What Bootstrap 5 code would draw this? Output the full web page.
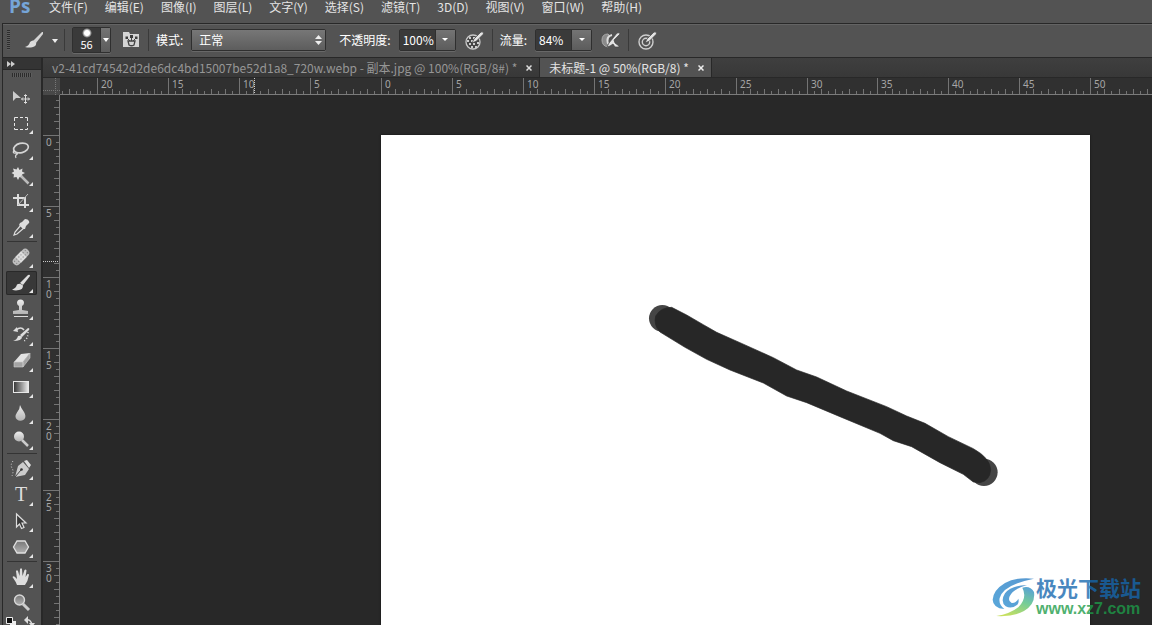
<!DOCTYPE html>
<html lang="zh-CN">
<head>
<meta charset="utf-8">
<meta name="viewport" content="width=device-width, initial-scale=1">
<title>Ps</title>
<link href="https://cdn.jsdelivr.net/npm/bootstrap@5.3.0/dist/css/bootstrap.min.css" rel="stylesheet">
<style>
  :root { --panel: #535353; --edge: #282828; --ink: #e4e4e4; }
  body { background: var(--panel); color: var(--ink); font: 12px/20px "Noto Sans CJK SC", "Noto Sans", sans-serif; }
  button, input, select { font: inherit; color: inherit; padding: 0; border: 0; background: none; }
  button { display: flex; align-items: center; justify-content: center; }
  svg { display: block; flex: none; }

  .menu-bar { height: 23px; padding-left: 9px; gap: 17px; }
  .menu-bar a { line-height: 14px; color: var(--ink); text-decoration: none; white-space: nowrap; }
  .app-logo { width: 23px; color: #76a5d8; font: bold 19px/13px "Open Sans", sans-serif; }

  .option-bar { height: 35px; padding: 0 0 2px 4px; margin-left: 2px; border: 1px solid var(--edge); border-width: 1px 0 1px 1px; box-shadow: inset 0 1px #646464; }
  .option-bar label { line-height: 16px; color: #fff; white-space: nowrap; }
  .grip-v { width: 3px; height: 20px; background: repeating-linear-gradient(#2c2c2c 0 1px, #5d5d5d 1px 2px); }
  .divider { width: 1px; height: 22px; margin: 0 7px 0 6px; background: #3a3a3a; }
  .brush-pick { margin-left: 15px; }
  .brush-panel { margin: 0 2px 0 12px; }
  .opacity-label { margin-left: 13px; }
  .field { height: 22px; border: 1px solid #2f2f2f; border-radius: 2px; box-shadow: 0 1px #686868; }
  .field input { width: 35px; height: 20px; background: #3a3a3a; color: #fff; padding-left: 3px; }
  .field button { width: 20px; height: 20px; background: linear-gradient(#747474, #5c5c5c); border-left: 1px solid #2f2f2f; }
  .field.preset { height: 26px; }
  .field.preset .tip { width: 27px; height: 24px; background: #3a3a3a; color: #fff; flex-direction: column; justify-content: flex-start; border: 0; line-height: 11px; font-size: 11px; }
  .field.preset .drop { width: 10px; height: 24px; }
  .mode-pick { width: 135px; }
  .mode-pick select { display: block; width: 100%; height: 20px; padding: 0 7px; appearance: none; color: #fff; background: linear-gradient(#777, #5d5d5d); line-height: 18px; }
  .mode-pick svg { right: 3px; top: 5px; pointer-events: none; }

  .tool-panel { width: 41px; margin-left: 2px; border: 1px solid var(--edge); border-width: 0 2px 0 1px; }
  .tool-head { height: 12px; background: #343434; border-bottom: 1px solid var(--edge); padding-left: 4px; }
  .grip-h { width: 20px; height: 4px; margin: 3px auto 7px; background: repeating-linear-gradient(90deg, #2c2c2c 0 1px, #5d5d5d 1px 2px); }
  .tool { width: 31px; height: 26px; margin: 0 3px; flex: none; }
  .tool.active { height: 24px; margin: 1px 3px; background: #383838; box-shadow: inset 0 0 0 1px #292929; border-radius: 2px; }
  .tool-rule { height: 1px; margin: 1px 4px 2px; background: #343434; flex: none; }

  .tab-strip { height: 20px; background: linear-gradient(#3f3f3f, #383838); border-bottom: 1px solid var(--edge); }
  .doc-tab { height: 19px; padding: 0 6px 0 9px; border-right: 1px solid var(--edge); color: #969696; white-space: nowrap; }
  .doc-tab a { color: inherit; text-decoration: none; }
  .doc-tab.active { background: var(--panel); color: var(--ink); }
  .doc-tab button { width: 8px; height: 14px; margin-left: 8px; }

  .corner { width: 17px; height: 17px; background: #484848; flex: none; }
  .ruler { background: #303030; overflow: hidden; }
  .ruler-x { height: 17px; border-bottom: 1px solid #7b7b7b; }
  .ruler-y { width: 17px; flex: none; border-right: 1px solid #7b7b7b; }
  .ruler path { stroke: #747474; fill: none; shape-rendering: crispEdges; }
  .ruler text { fill: #a6a6a6; font: 10px "Noto Sans", sans-serif; }
  .stage { background: #282828; padding: 40px 62px 0 321px; }
  .sheet { background: #fff; box-shadow: 0 0 2px #111; overflow: hidden; }
  .site-mark { right: 11px; bottom: 7px; opacity: .78; }
  .site-name { font: bold 21px/24px "Noto Sans CJK SC", sans-serif; color: #1667ae; }
  .site-url { font: bold 16px/19px "Liberation Sans", sans-serif; color: #1d9c48; text-decoration: none; }
</style>
</head>
<body class="vh-100 overflow-hidden d-flex flex-column">

<nav class="menu-bar d-flex flex-shrink-0 align-items-start">
  <span class="app-logo">Ps</span>
  <a href="#">文件(F)</a><a href="#">编辑(E)</a><a href="#">图像(I)</a><a href="#">图层(L)</a><a href="#">文字(Y)</a><a href="#">选择(S)</a><a href="#">滤镜(T)</a><a href="#">3D(D)</a><a href="#">视图(V)</a><a href="#">窗口(W)</a><a href="#">帮助(H)</a>
</nav>

<div class="option-bar d-flex flex-shrink-0 align-items-center">
  <span class="grip-v"></span>
  <button type="button" class="brush-pick" aria-label="画笔工具">
    <svg width="33" height="18"><path d="M0 16q4-1 5-5 3-3 6 0 1 4-3 5-4 1-8 0z" fill="#ddd"/><path d="M8 10 17 1h1v2l-7 9z" fill="#d4d4d4"/><path d="M27 8h6l-3 4z" fill="#eee"/></svg>
  </button>
  <span class="divider"></span>
  <div class="field preset d-flex">
    <button type="button" class="tip" aria-label="画笔大小 56"><svg width="14" height="11"><defs><radialGradient id="ball"><stop offset=".5" stop-color="#fff"/><stop offset="1" stop-color="#fff" stop-opacity="0"/></radialGradient></defs><circle cx="7" cy="5" r="5" fill="url(#ball)"/></svg><span>56</span></button>
    <button type="button" class="drop" aria-label="画笔预设"><svg width="6" height="4"><path d="M0 0h6L3 4z" fill="#fff"/></svg></button>
  </div>
  <button type="button" class="brush-panel" aria-label="画笔面板">
    <svg width="17" height="17"><path d="M0 1h6l1 2h9v13H0z" fill="#d4d4d4"/><path d="M5 10h7l-1 4q-2.500 1.500-5 0z" fill="none" stroke="#444" stroke-width="1.300"/><path d="m7 10-3-3M8.500 10V6M10 10l3-3" stroke="#444"/><path d="M2.500 5.500h2.500v2.500H2.500zM7 4h3v3H7zM12 5.500h2.500v2.500H12z" fill="#3c3c3c"/></svg>
  </button>
  <span class="divider"></span>
  <label for="mode">模式:</label>
  <div class="field mode-pick position-relative ms-2">
    <select id="mode"><option>正常</option></select>
    <svg class="position-absolute" width="7" height="10"><path d="M0 4h7L3.500 0zM0 6h7L3.500 10z" fill="#eee"/></svg>
  </div>
  <label for="opacity" class="opacity-label">不透明度:</label>
  <div class="field d-flex ms-2">
    <input id="opacity" type="text" value="100%">
    <button type="button" aria-label="不透明度滑块"><svg width="6" height="3"><path d="M0 0h6L3 3z" fill="#fff"/></svg></button>
  </div>
  <button type="button" class="ms-2" aria-label="不透明度压力">
    <svg width="22" height="20"><circle cx="9" cy="12" r="7" fill="#454545" stroke="#c9c9c9" stroke-width="1.300"/><path d="M5 7h2v2H5zM9 7h2v2H9zM3 10h2v2H3zM7 10h2v2H7zM5 13h2v2H5zM9 13h2v2H9zM13 12h2v2h-2zM7 16h2v2H7zM11 16h2v2h-2z" fill="#ccc"/><path d="m8 13 2-4 7-7q3-1 2.500 2l-7 7z" fill="#e3e3e3" stroke="#444" stroke-width=".7"/></svg>
  </button>
  <span class="divider"></span>
  <label for="flow">流量:</label>
  <div class="field d-flex ms-2">
    <input id="flow" type="text" value="84%">
    <button type="button" aria-label="流量滑块"><svg width="6" height="3"><path d="M0 0h6L3 3z" fill="#fff"/></svg></button>
  </div>
  <button type="button" class="ms-2" aria-label="喷枪">
    <svg width="22" height="20"><path d="M8 4Q2 4 2 10t6 7l1-2Q4 11 9 5z" fill="#8a8a8a" stroke="#aaa"/><path d="M12 5q-6 1-4 9" stroke="#ddd" stroke-width="2" fill="none"/><path d="m14 10 1 3 4 3v1h-4l-2-3-3 2-3 1 2-4 8-10q3-1 3 1z" fill="#e3e3e3" stroke="#444" stroke-width=".7"/></svg>
  </button>
  <span class="divider"></span>
  <button type="button" aria-label="大小压力">
    <svg width="22" height="20"><g fill="none" stroke="#cfcfcf" stroke-width="1.400"><circle cx="10" cy="12" r="7"/><circle cx="10" cy="12" r="3.700"/></g><path d="m9 13 2-4 7-7q3-1 2.500 2l-7 7z" fill="#e3e3e3" stroke="#444" stroke-width=".7"/></svg>
  </button>
</div>

<div class="d-flex flex-fill overflow-hidden">
  <aside class="tool-panel d-flex flex-column flex-shrink-0 overflow-hidden">
    <div class="tool-head d-flex flex-shrink-0 align-items-center"><svg width="8" height="6"><path d="M0 0l4 3-4 3zM4 0l4 3-4 3z" fill="#ccc"/></svg></div>
    <div class="grip-h flex-shrink-0"></div>
    <svg width="0" height="0" class="position-absolute"><defs>
      <path id="more" d="M27 20v4h-4z" fill="#e6e6e6"/>
      <linearGradient id="metal" x2="0" y2="1"><stop stop-color="#eee"/><stop offset="1" stop-color="#b4b4b4"/></linearGradient>
      <linearGradient id="glass" x2="0" y2="1"><stop stop-color="#777"/><stop offset="1" stop-color="#b0b0b0"/></linearGradient>
      <linearGradient id="fade"><stop stop-color="#333"/><stop offset="1" stop-color="#eee"/></linearGradient>
    </defs></svg>
    <button type="button" class="tool" aria-label="移动"><svg width="31" height="26"><path d="M7 7v10l3-3h5z" fill="#ccc"/><path d="M19.500 11v8M15.500 15h8M18 12l1.500-1.500L21 12M18 18l1.500 1.500L21 18M17 13.500 15.500 15l1.500 1.500M22 13.500l1.500 1.500-1.500 1.500" stroke="#ddd" fill="none"/></svg></button>
    <button type="button" class="tool" aria-label="选框"><svg width="31" height="26"><path d="M8.500 11V7.500H12M14 7.500h3M19 7.500h2.500V11M21.500 13v3M21.500 18v1.500H19M17 19.500h-3M12 19.500H8.500V18M8.500 16v-3" stroke="#e6e6e6" fill="none"/><use href="#more"/></svg></button>
    <button type="button" class="tool" aria-label="套索"><svg width="31" height="26"><ellipse cx="15" cy="12" rx="7.500" ry="4.700" transform="rotate(-14 15 12)" fill="none" stroke="#d4d4d4" stroke-width="1.700"/><path d="M8 14q-2 4 2 3 3 0 0 2-1 1 0 3" stroke="#d4d4d4" fill="none" stroke-width="1.300"/><use href="#more"/></svg></button>
    <button type="button" class="tool" aria-label="魔棒"><svg width="31" height="26"><path d="m12 5 1.500 3 3-1.500-.5 3 3 1.500-3 1.500.5 3-3-.5-1.500 3-1.500-3-3 .5.500-3-2.500-1.500 2.500-1.500-1-3 3.500 1z" fill="#ddd"/><path d="m15 14 7.500 7.500" stroke="#bbb" stroke-width="2.500"/><use href="#more"/></svg></button>
    <button type="button" class="tool" aria-label="裁剪"><svg width="31" height="26"><path d="M7 10h12v10M12 6v11h11" fill="none" stroke="#ddd" stroke-width="2"/><path d="m12 17 10-11" stroke="#bbb"/><use href="#more"/></svg></button>
    <button type="button" class="tool" aria-label="吸管"><svg width="31" height="26"><path d="m15 11 3 3-7 6-3 1 1-3z" fill="#555" stroke="#ddd" stroke-width="1.200"/><path d="m14 9 2-1 3-3q3 0 4 2 1 2-1 3l-2 2-1 3-2 0-4-4z" fill="#ddd"/><use href="#more"/></svg></button>
    <div class="tool-rule"></div>
    <button type="button" class="tool" aria-label="修复画笔"><svg width="31" height="26"><g transform="rotate(-45 15 13)"><rect x="5" y="9" width="20" height="8" rx="4" fill="#bdbdbd"/><path d="M11 9h8v8h-8z" fill="#dcdcdc"/><path d="M7 11.500h17M7 14.500h17" stroke="#777" stroke-dasharray="1 2"/></g><use href="#more"/></svg></button>
    <button type="button" class="tool active" aria-label="画笔"><svg width="31" height="26"><path d="M6 19.500q4-1 5-5 3-2 6 1 0 4-4 4.500-4 1-7-.5z" fill="#ddd"/><path d="m14 13 8-8q2-1 2 1l-7 9z" fill="#ddd"/><use href="#more" y="-1"/></svg></button>
    <button type="button" class="tool" aria-label="图章"><svg width="31" height="26"><path d="M13 14V10q-2-1-2-3a3.500 3.500 0 0 1 7 0q0 2-2 3v4l6 1v3H7v-3z" fill="url(#metal)"/><path d="M8 20.500h14" stroke="#ddd"/><use href="#more"/></svg></button>
    <button type="button" class="tool" aria-label="历史画笔"><svg width="31" height="26"><path d="M7 19q4-1 5-5 2-1 4 1 0 4-9 4zM14 13l8-7q2 0 1 2l-7 7z" fill="#ddd"/><path d="M10 8q5-4 8 0" stroke="#ddd" stroke-width="1.500" fill="none"/><path d="m7 9 4-4 1 5z" fill="#ddd"/><path d="M22 10q0 7-4 9" stroke="#ddd" stroke-width="1.500" stroke-dasharray="1 2" fill="none"/><use href="#more"/></svg></button>
    <button type="button" class="tool" aria-label="橡皮擦"><svg width="31" height="26"><path d="m8 14 7-8 9-1-7 9z" fill="#e2e2e2"/><path d="m8 14 9 0v5H8zM17 14l7-9v5l-7 9z" fill="#a4a4a4" stroke="#ccc" stroke-width=".6"/><use href="#more"/></svg></button>
    <button type="button" class="tool" aria-label="渐变"><svg width="31" height="26"><rect x="7.500" y="7.500" width="15" height="11" fill="url(#fade)" stroke="#e8e8e8"/><use href="#more"/></svg></button>
    <button type="button" class="tool" aria-label="模糊"><svg width="31" height="26"><path d="M14 5q1 3 4 7 3 5 0 7.500-4 2.500-7 0-3-2.500 0-7Q14 9 14 5z" fill="url(#metal)"/><use href="#more"/></svg></button>
    <button type="button" class="tool" aria-label="减淡"><svg width="31" height="26"><circle cx="13" cy="10.500" r="5" fill="url(#metal)"/><path d="m16 14 6 6" stroke="#ccc" stroke-width="2.500"/><use href="#more"/></svg></button>
    <div class="tool-rule"></div>
    <button type="button" class="tool" aria-label="钢笔"><svg width="31" height="26"><path d="m18 5 3-1 4 5-2 3z" fill="#ddd"/><path d="m17 6 6 7-4 6-10 2 3-11z" fill="#ccc"/><path d="m9 21 6-7" stroke="#444"/><circle cx="15.500" cy="13.500" r="1.300" fill="#333"/><path d="M7 5q-3 4-1 7t0 8" stroke="#ddd" stroke-dasharray="1 2" fill="none"/><use href="#more"/></svg></button>
    <button type="button" class="tool" aria-label="文字"><svg width="31" height="26"><text x="15" y="19" text-anchor="middle" font-family="Liberation Serif, serif" font-size="20" fill="#ddd">T</text><use href="#more"/></svg></button>
    <button type="button" class="tool" aria-label="路径选择"><svg width="31" height="26"><path d="M10.500 6v13l3-3 2 4.500 2.500-1L16 15h4z" fill="#3a3a3a" stroke="#ddd" stroke-width="1.200"/><use href="#more"/></svg></button>
    <button type="button" class="tool" aria-label="形状"><svg width="31" height="26"><path d="M11 7h8l3.500 6-3.500 6h-8l-3.500-6z" fill="url(#glass)" stroke="#e0e0e0" stroke-width="1.300"/><use href="#more"/></svg></button>
    <div class="tool-rule"></div>
    <button type="button" class="tool" aria-label="抓手"><svg width="31" height="26"><path d="M11 21q-1-3-4.500-8 1-1.500 2.500 0l2 2-1-8q1-1.500 2 0l1.500 5 .5-7q1.200-1.500 2 0l.5 7 2-6q1.500-1 2 .5L19.500 13l2-3q1.500-.5 1.500 1-1 6-4 10z" fill="#ddd"/><use href="#more"/></svg></button>
    <button type="button" class="tool" aria-label="缩放"><svg width="31" height="26"><path d="m17 14 6 6" stroke="#ccc" stroke-width="3"/><circle cx="13.500" cy="10" r="5" fill="url(#glass)" stroke="#d8d8d8" stroke-width="1.400"/></svg></button>
    <button type="button" class="tool" aria-label="前景色与背景色"><svg width="31" height="26"><path d="M4 5h6v6H4z" fill="#eee"/><path d="M.5 1.500h6v6h-6z" fill="#111" stroke="#eee"/><path d="M20 4q5-1 6 5" stroke="#ddd" fill="none" stroke-width="1.500"/><path d="m18 4 4-4v8zM23 7h6l-3 4z" fill="#ddd"/></svg></button>
  </aside>

  <main class="flex-fill d-flex flex-column overflow-hidden">
    <div class="tab-strip d-flex flex-shrink-0">
      <div class="doc-tab d-flex align-items-center"><a href="#">v2-41cd74542d2de6dc4bd15007be52d1a8_720w.webp - 副本.jpg @ 100%(RGB/8#) *</a><button type="button" aria-label="关闭"><svg width="6" height="6"><path d="m.5.500 5 5M5.500.500l-5 5" stroke="#ddd" stroke-width="1.500"/></svg></button></div>
      <div class="doc-tab active d-flex align-items-center"><a href="#">未标题-1 @ 50%(RGB/8) *</a><button type="button" aria-label="关闭"><svg width="6" height="6"><path d="m.5.500 5 5M5.500.500l-5 5" stroke="#eee" stroke-width="1.500"/></svg></button></div>
    </div>
    <div class="d-flex flex-shrink-0">
      <div class="corner"><svg width="17" height="17"><path d="M12.500 0v17M0 12.500h17" stroke="#777" stroke-dasharray="1 1"/></svg></div>
      <div class="ruler ruler-x flex-fill"><svg id="rulerX" width="100%" height="16"></svg></div>
    </div>
    <div class="d-flex flex-fill overflow-hidden">
      <div class="ruler ruler-y"><svg id="rulerY" width="16" height="100%"></svg></div>
      <div class="stage flex-fill d-flex">
        <div class="sheet flex-fill">
          <svg width="640" height="400"><g transform="translate(259 155) scale(.3333)">
            <circle cx="67" cy="85" r="40" fill="#454545"/><circle cx="1032" cy="547" r="41" fill="#454545"/>
            <path d="M95 52 140 75 190 104 230 127 300 158 400 203 470 240 530 261 620 303 740 350 800 378 855 400 925 440 1000 476Q1052 505 1052 540 1050 572 1020 578L1000 576 970 553 900 518 815 470 760 452 720 430 600 380 500 338 440 318 370 279 270 240 200 208 135 172 60 126Q40 105 47 78 62 52 95 52Z" fill="#272727" stroke="#272727" stroke-width="2" stroke-linejoin="round"/>
          </g></svg>
        </div>
      </div>
    </div>
  </main>
</div>

<div class="site-mark position-absolute d-flex align-items-center">
  <svg width="44" height="42" viewBox="21 16 132 126"><defs>
      <linearGradient id="sky" x1="0" y1="1" x2="1" y2="0"><stop stop-color="#2b8fd0"/><stop offset="1" stop-color="#2a7cc4"/></linearGradient>
      <linearGradient id="aurora" x1=".8" y1="0" x2=".3" y2="1"><stop stop-color="#2c8ac8"/><stop offset=".45" stop-color="#4fbf7c"/><stop offset="1" stop-color="#b9d832"/></linearGradient></defs>
    <path d="M147 24Q95 18 60 37 25 58 23 87 24 112 58 115 40 100 44 82 55 42 147 24z" fill="url(#sky)"/>
    <path d="M126 43Q78 45 60 68 45 92 62 107 80 116 97 102 103 95 100 84 94 98 80 97 68 92 74 77 84 55 126 43z" fill="url(#sky)"/>
    <path d="M112 51Q135 44 147 64 152 100 117 121 85 139 34 136 75 130 100 110 128 82 112 51z" fill="url(#aurora)"/>
  </svg>
  <div class="d-flex flex-column"><span class="site-name">极光下载站</span><a class="site-url" href="#">www.xz7.com</a></div>
</div>

<script>
  // Rulers: a labelled mark every 5 cm, a tick per centimetre and a shorter one per half.
  const HALF_CM = 7.092;
  function drawRuler(svg, origin, length, vertical, cursor) {
    let ticks = '', labels = '';
    for (let n = -Math.floor(origin / HALF_CM); origin + n * HALF_CM < length; n++) {
      const p = Math.round(origin + n * HALF_CM) + .5;
      const size = n % 10 === 0 ? 16 : n % 2 === 0 ? 5 : 3;
      ticks += vertical ? `M16 ${p}h-${size}` : `M${p} 16v-${size}`;
      if (n % 10) continue;
      const value = String(Math.abs(n / 2));
      labels += vertical
        ? [...value].map((d, i) => `<text x="3" y="${Math.floor(p) + 11 + i * 10}">${d}</text>`).join('')
        : `<text x="${Math.floor(p) + 4}" y="10">${value}</text>`;
    }
    const mark = vertical ? `M0 ${cursor}.5h16` : `M${cursor}.5 0v16`;
    svg.innerHTML = `<path d="${ticks}"/><path d="${mark}" style="stroke:#ccc" stroke-dasharray="1 1"/>${labels}`;
  }
  function drawRulers() {
    const x = document.getElementById('rulerX'), y = document.getElementById('rulerY');
    drawRuler(x, 321, x.parentNode.clientWidth, false, 194);
    drawRuler(y, 40, y.parentNode.clientHeight, true, 166);
  }
  drawRulers();
  addEventListener('resize', drawRulers);
</script>
<script src="https://cdn.jsdelivr.net/npm/bootstrap@5.3.0/dist/js/bootstrap.bundle.min.js"></script>
</body>
</html>
